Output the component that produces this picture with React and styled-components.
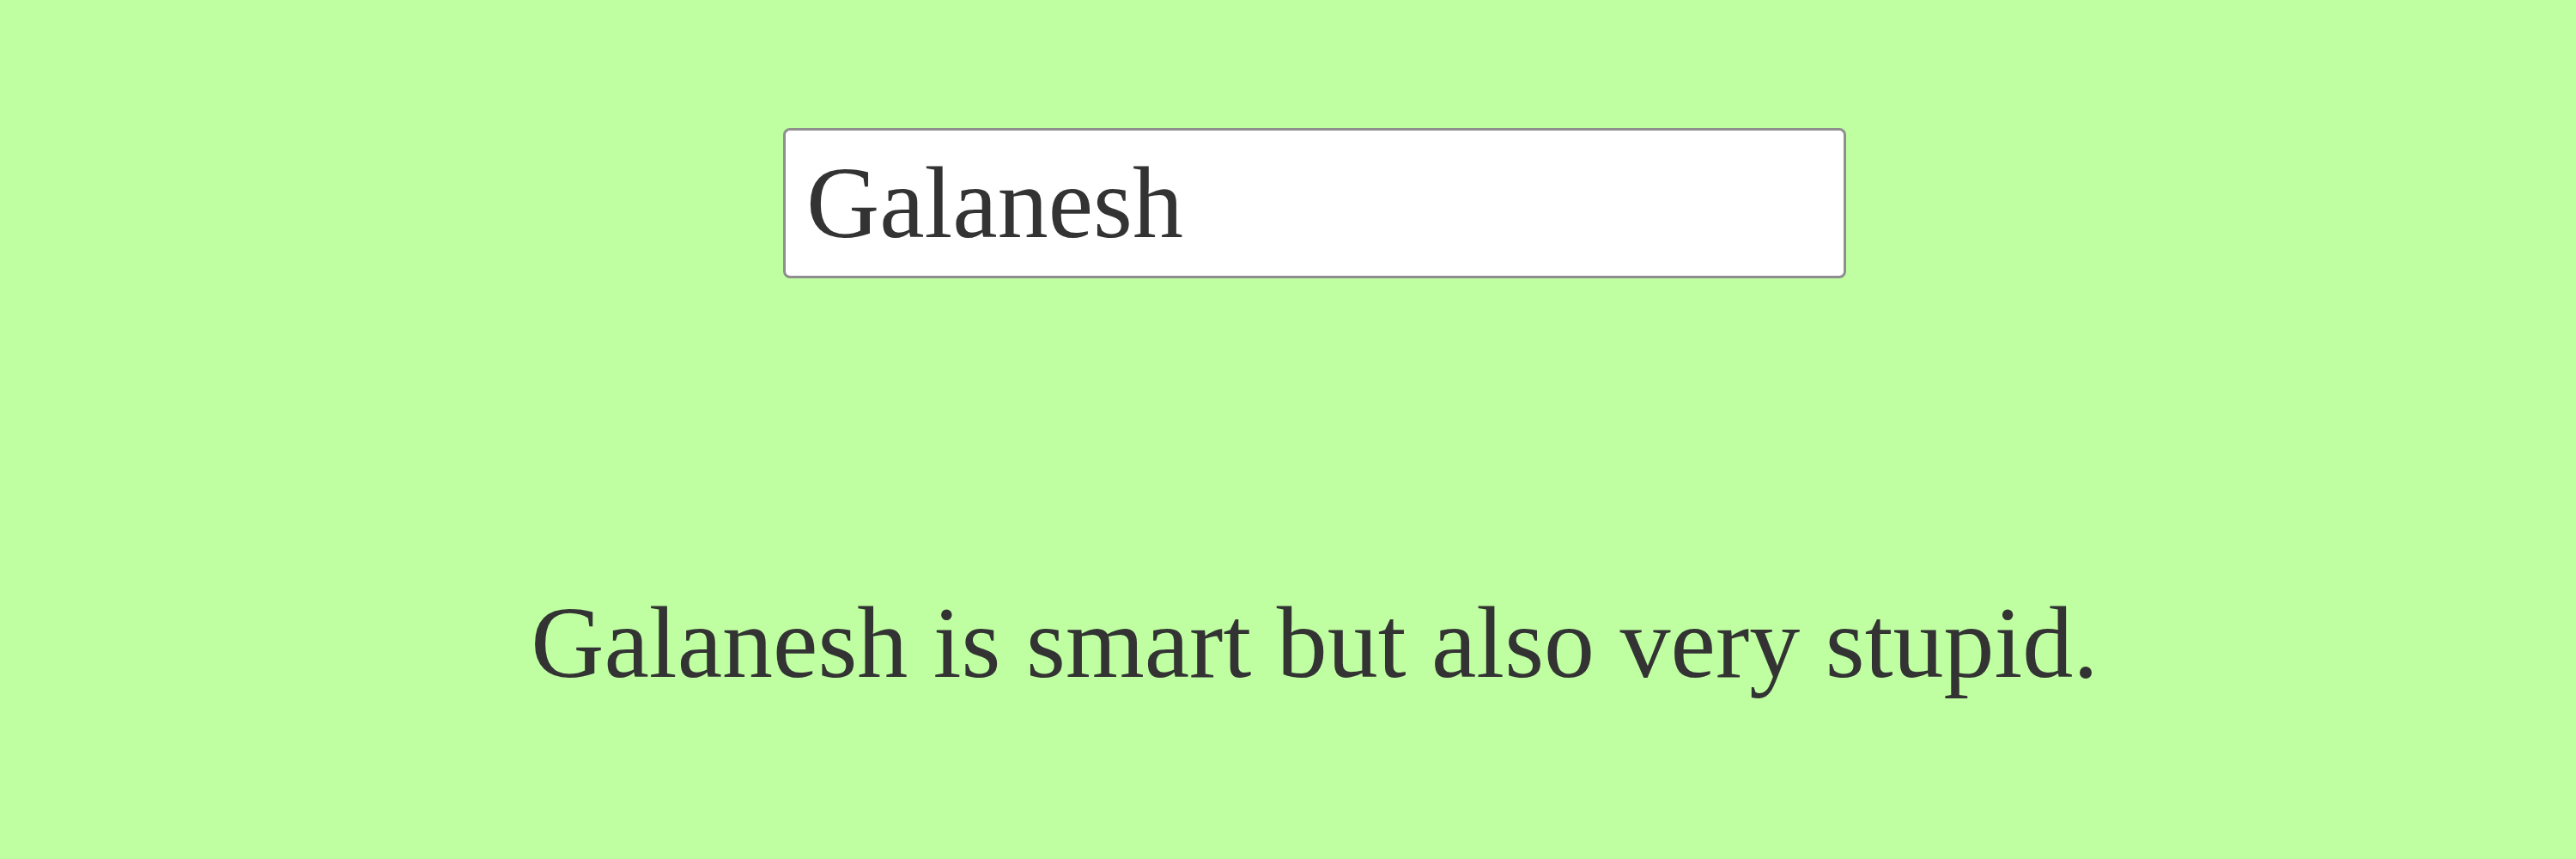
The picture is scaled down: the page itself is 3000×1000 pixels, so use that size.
import React, { useState } from "react";
import styled, { createGlobalStyle } from "styled-components";

const GlobalStyle = createGlobalStyle`
  html, body {
    margin: 0;
    padding: 0;
    background: #bfffa2;
  }
  body {
    font-family: "Liberation Serif", "Times New Roman", serif;
    min-height: 1000px;
  }
`;

const Page = styled.main`
  display: flex;
  flex-direction: column;
  align-items: center;
  padding: 149px 0 0 62px;
`;

const NameInput = styled.input`
  box-sizing: border-box;
  width: 1238px;
  height: 175px;
  padding: 0 24px;
  border: 3px solid #8e8e8e;
  border-radius: 8px;
  background: #fff;
  font-family: "Liberation Serif", "Times New Roman", serif;
  font-size: 118px;
  color: #333;
  outline: none;
`;

const Sentence = styled.p`
  margin: 357px 0 0;
  font-size: 118px;
  line-height: normal;
  color: #333;
  white-space: nowrap;
`;

const App = () => {
  const [name, setName] = useState("Galanesh");

  return (
    <>
      <GlobalStyle />
      <Page>
        <NameInput value={name} onChange={(e) => setName(e.target.value)} />
        <Sentence>{name} is smart but also very stupid.</Sentence>
      </Page>
    </>
  );
};

export default App;
